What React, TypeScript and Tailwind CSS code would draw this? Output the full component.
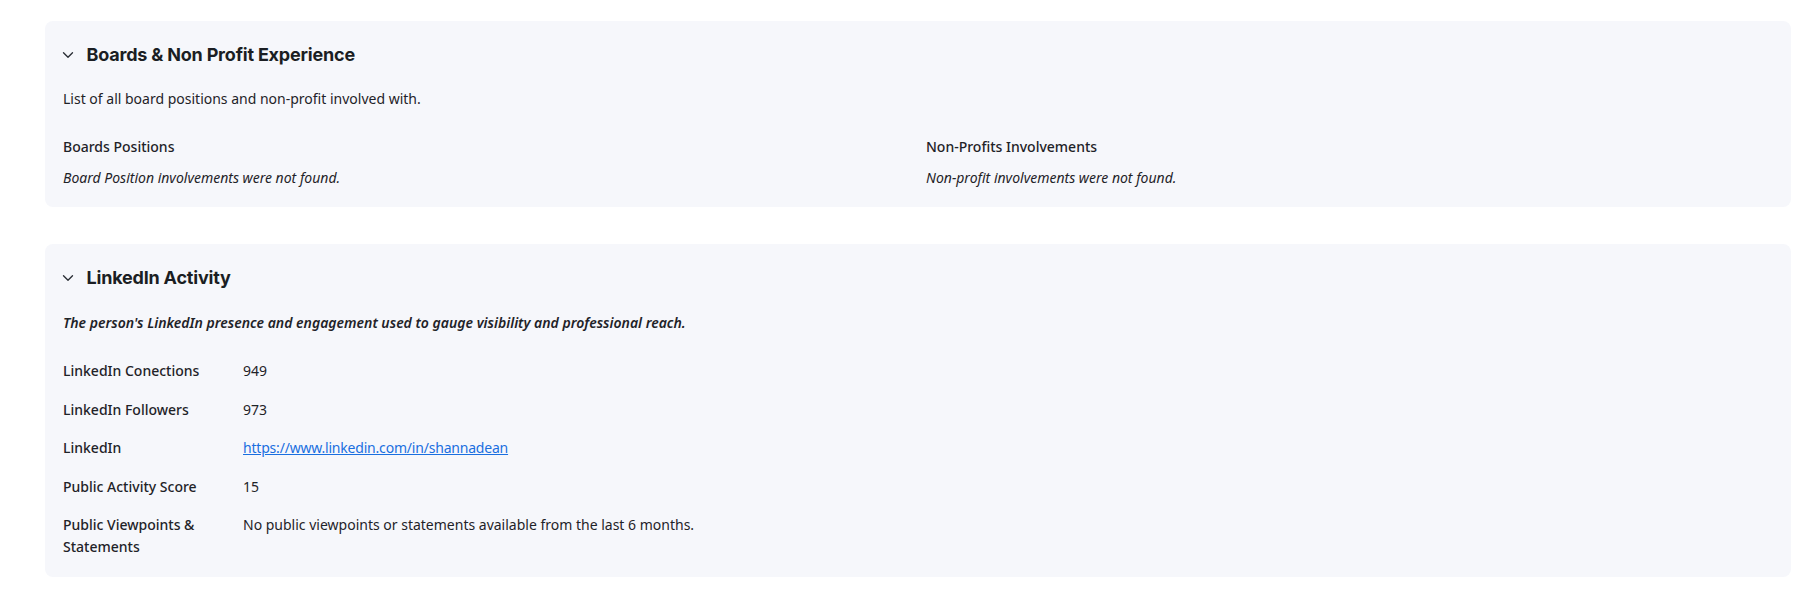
import React from 'react';
import { ChevronDown } from 'lucide-react';

type Row = { label: string; value: string; href?: string };

const rows: Row[] = [
  { label: 'LinkedIn Conections', value: '949' },
  { label: 'LinkedIn Followers', value: '973' },
  { label: 'LinkedIn', value: 'https://www.linkedin.com/in/shannadean', href: 'https://www.linkedin.com/in/shannadean' },
  { label: 'Public Activity Score', value: '15' },
  { label: 'Public Viewpoints & Statements', value: 'No public viewpoints or statements available from the last 6 months.' },
];

const Section: React.FC<{ title: string; children: React.ReactNode }> = ({ title, children }) => (
  <section className="rounded-lg bg-[#f6f7fb] px-[18px] pt-[20px] pb-[19px]">
    <div className="flex items-center h-7">
      <ChevronDown className="w-[18px] h-[18px] text-[#2b2f36] ml-[-4.5px]" strokeWidth={1.8} />
      <h2 className="ml-[10px] text-[18px] leading-7 font-bold text-[#1b1e23] tracking-[-0.2px] font-['Inter',sans-serif]">
        {title}
      </h2>
    </div>
    {children}
  </section>
);

const App: React.FC = () => {
  return (
    <div className="min-h-screen bg-white font-['Noto_Sans',sans-serif] text-[#1f2328] text-[14px]">
      <div className="ml-[45px] mr-[21px] pt-[21px] flex flex-col gap-[37px]">
        {/* Boards & non profit */}
        <Section title="Boards & Non Profit Experience">
          <p className="mt-[20px] leading-5">List of all board positions and non-profit involved with.</p>
          <div className="mt-[28px] grid grid-cols-2 gap-x-4">
            <div>
              <h3 className="leading-5 font-medium">Boards Positions</h3>
              <p className="mt-[11px] leading-5 italic">Board Position involvements were not found.</p>
            </div>
            <div>
              <h3 className="leading-5 font-medium">Non-Profits Involvements</h3>
              <p className="mt-[11px] leading-5 italic">Non-profit involvements were not found.</p>
            </div>
          </div>
        </Section>

        {/* LinkedIn */}
        <Section title="LinkedIn Activity">
          <p className="mt-[21px] leading-5 italic font-semibold">
            The person's LinkedIn presence and engagement used to gauge visibility and professional reach.
          </p>
          <div className="mt-[27px] flex flex-col gap-[16.5px]">
            {rows.map((r) => (
              <div key={r.label} className="flex leading-[22px]">
                <div className="w-[164px] pr-4 font-medium">{r.label}</div>
                <div className="ml-4">
                  {r.href ? (
                    <a href={r.href} className="text-[#1a6fe0] underline tracking-[-0.2px]">
                      {r.value}
                    </a>
                  ) : (
                    r.value
                  )}
                </div>
              </div>
            ))}
          </div>
        </Section>
      </div>
    </div>
  );
};

export default App;
